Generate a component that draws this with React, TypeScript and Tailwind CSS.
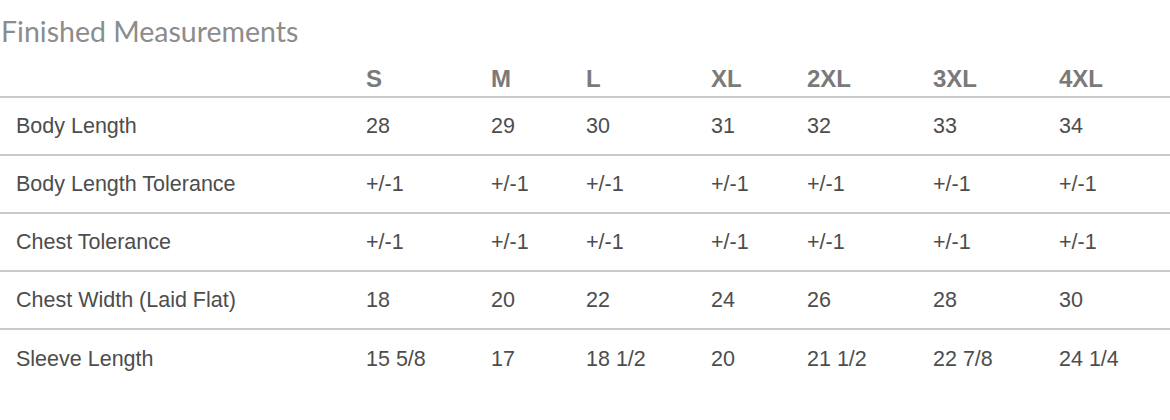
const sizes = ["S", "M", "L", "XL", "2XL", "3XL", "4XL"];

const rows = [
  { name: "Body Length", values: ["28", "29", "30", "31", "32", "33", "34"] },
  {
    name: "Body Length Tolerance",
    values: ["+/-1", "+/-1", "+/-1", "+/-1", "+/-1", "+/-1", "+/-1"],
  },
  {
    name: "Chest Tolerance",
    values: ["+/-1", "+/-1", "+/-1", "+/-1", "+/-1", "+/-1", "+/-1"],
  },
  { name: "Chest Width (Laid Flat)", values: ["18", "20", "22", "24", "26", "28", "30"] },
  {
    name: "Sleeve Length",
    values: ["15 5/8", "17", "18 1/2", "20", "21 1/2", "22 7/8", "24 1/4"],
  },
];

// label column + 7 size columns
const cols = "grid grid-cols-[366px_125px_95px_125px_96px_126px_126px_1fr]";

export default function App() {
  return (
    <div className="w-[1170px] h-[420px] bg-white font-['Liberation_Sans',Arial,sans-serif]">
      <h2 className="h-[58px] pl-[1px] pt-[14px] text-[28.5px] leading-[34px] font-normal text-[#8c8c8c] font-['Lato',sans-serif]">
        Finished Measurements
      </h2>

      <div className={`${cols} h-[40px] items-end pb-[5px] border-b-2 border-[#c9c9c9]`}>
        <div />
        {sizes.map((s) => (
          <div key={s} className="text-[24px] leading-6 font-bold text-[#7a7a7a]">
            {s}
          </div>
        ))}
      </div>

      {rows.map((row, i) => (
        <div
          key={row.name}
          className={`${cols} h-[58px] items-center text-[21.5px] text-[#4d4d4d] ${
            i < rows.length - 1 ? "border-b-2 border-[#c9c9c9]" : ""
          }`}
        >
          <div className="pl-4">{row.name}</div>
          {row.values.map((v, j) => (
            <div key={j}>{v}</div>
          ))}
        </div>
      ))}
    </div>
  );
}
